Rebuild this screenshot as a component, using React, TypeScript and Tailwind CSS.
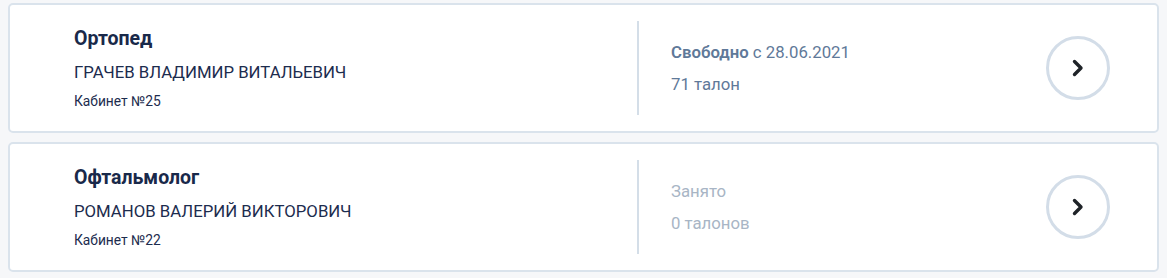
import React from "react";

type Doctor = {
  specialty: string;
  name: string;
  room: string;
  free: boolean;
  since?: string;
  tickets: string;
};

const doctors: Doctor[] = [
  {
    specialty: "Ортопед",
    name: "ГРАЧЕВ ВЛАДИМИР ВИТАЛЬЕВИЧ",
    room: "Кабинет №25",
    free: true,
    since: "28.06.2021",
    tickets: "71 талон",
  },
  {
    specialty: "Офтальмолог",
    name: "РОМАНОВ ВАЛЕРИЙ ВИКТОРОВИЧ",
    room: "Кабинет №22",
    free: false,
    tickets: "0 талонов",
  },
];

function ChevronButton() {
  return (
    <button
      type="button"
      className="flex h-[64px] w-[64px] items-center justify-center rounded-full border-[3px] border-[#d3dde8] bg-white"
    >
      <svg width="16" height="20" viewBox="0 0 16 20" fill="none">
        <path
          d="M4.5 3.5 L11 10 L4.5 16.5"
          stroke="#1f2328"
          strokeWidth="3.4"
          strokeLinecap="round"
          strokeLinejoin="round"
        />
      </svg>
    </button>
  );
}

function DoctorCard({ doctor }: { doctor: Doctor }) {
  const tone = doctor.free ? "text-[#5f7999]" : "text-[#a8b5c5]";
  return (
    <div className="flex h-[130px] items-center rounded-[5px] border-2 border-[#dae3ec] bg-white">
      <div className="w-[627px] shrink-0 pl-[64px]">
        <div className="text-[19.5px] font-bold leading-[22px] text-[#19294a]">
          {doctor.specialty}
        </div>
        <div className="mt-[12px] text-[16.75px] leading-[20px] text-[#1c2c4e]">
          {doctor.name}
        </div>
        <div className="mt-[11px] text-[13.8px] leading-[16px] text-[#1c2c4e]">
          {doctor.room}
        </div>
      </div>
      <div className="my-[16px] w-[2px] self-stretch bg-[#d4dee8]" />
      <div className={"flex-1 pl-[32px] text-[16.75px] leading-[20px] " + tone}>
        {doctor.free ? (
          <div>
            <span className="font-semibold">Свободно</span> с {doctor.since}
          </div>
        ) : (
          <div>Занято</div>
        )}
        <div className="mt-[12px]">{doctor.tickets}</div>
      </div>
      <div className="pr-[47px]">
        <ChevronButton />
      </div>
    </div>
  );
}

export default function App() {
  return (
    <div
      className="min-h-[278px] bg-[#f6f7f9] px-[8px] pt-[3px]"
      style={{ fontFamily: "Roboto, 'Noto Sans', sans-serif" }}
    >
      <div className="flex flex-col gap-[9px]">
        {doctors.map((d) => (
          <DoctorCard key={d.name} doctor={d} />
        ))}
      </div>
    </div>
  );
}
